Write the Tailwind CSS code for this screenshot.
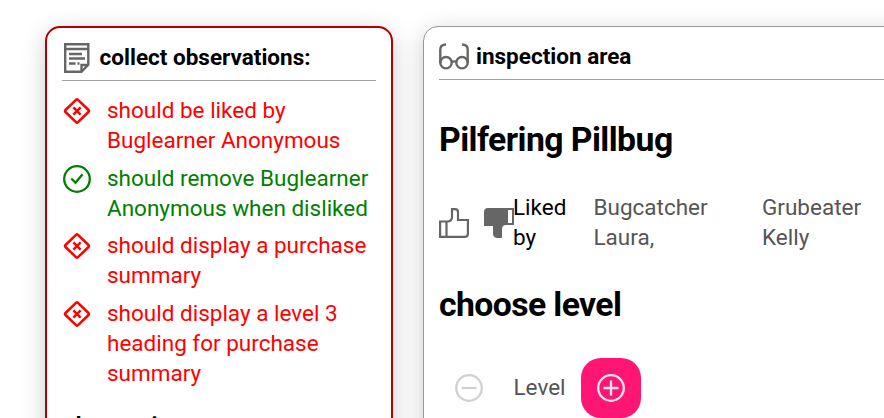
<!DOCTYPE html>
<html lang="en">
<head>
<meta charset="utf-8">
<title>Inspection</title>
<script src="https://cdn.jsdelivr.net/npm/@tailwindcss/browser@4"></script>
</head>
<body class="bg-white h-[418px] overflow-hidden font-[Roboto,sans-serif] text-[22.5px] leading-[30px] text-black">
<svg class="hidden">
  <symbol id="fail" viewBox="0 0 30 30"><g fill="none" stroke="currentColor" stroke-width="2.5"><path stroke-linejoin="round" d="M14 3.8 Q15 2.8 16 3.8 L26.5 14 Q27.5 15 26.5 16 L16 26.2 Q15 27.2 14 26.2 L3.5 16 Q2.5 15 3.5 14 Z"/><path d="M11.4 11.4 L18.6 18.6 M18.6 11.4 L11.4 18.6"/></g></symbol>
</svg>
<div class="flex items-start w-[884px] h-[418px] overflow-hidden pt-[26px] pl-[45px] gap-[30px]">
  <section class="w-[348px] h-[600px] shrink-0 border-2 border-[#b00000] rounded-[15px] px-[15px] pt-[14px] bg-white shadow-[0_6px_24px_rgba(0,0,0,0.2)]">
    <header class="flex items-start h-[39px] border-b border-[#a0a0a0]">
      <svg class="w-[30px] h-[32px] shrink-0" viewBox="0 0 30 32" fill="none" stroke="#666" stroke-width="2.4"><path d="M3.2 2.2 H26.3 V22.5 L19.5 29.8 H3.2 Z"/><path d="M3 7 H27 M7 12 H20 M7 16.5 H23 M7 21.5 H13.5 M15.5 21.5 H17.5"/><path d="M19.5 30 V23 H26.5"/></svg>
      <h2 class="ml-[7.6px] font-bold whitespace-nowrap">collect observations:</h2>
    </header>
    <ul class="mt-[14px] flex flex-col gap-[7.7px] text-[#f00]">
      <li class="flex gap-[15px]"><svg class="mt-px size-[30px] shrink-0"><use href="#fail"/></svg><span>should be liked by<br>Buglearner Anonymous</span></li>
      <li class="flex gap-[15px] text-[#008000]"><svg class="mt-px size-[30px] shrink-0" viewBox="0 0 30 30" fill="none" stroke="currentColor" stroke-width="2.3"><circle cx="15" cy="15" r="12.8"/><path d="M9.3 14.5 L13.5 18.8 L20.5 10.2"/></svg><span>should remove Buglearner<br>Anonymous when disliked</span></li>
      <li class="flex gap-[15px]"><svg class="mt-px size-[30px] shrink-0"><use href="#fail"/></svg><span>should display a purchase<br>summary</span></li>
      <li class="flex gap-[15px]"><svg class="mt-px size-[30px] shrink-0"><use href="#fail"/></svg><span>should display a level 3<br>heading for purchase<br>summary</span></li>
    </ul>
    <h2 class="mt-[22px] ml-px font-bold">observations:</h2>
  </section>
  <section class="w-[600px] h-[600px] shrink-0 border border-[#999] rounded-[15px] px-[15px] pt-[14px] bg-white shadow-[0_6px_24px_rgba(0,0,0,0.2)]">
    <header class="flex items-start h-[39px] border-b border-[#a0a0a0]">
      <svg class="mt-px w-[30px] h-[30px] shrink-0" viewBox="0 0 30 30" fill="none" stroke="#666" stroke-width="2.4"><circle cx="7" cy="20.7" r="5.7"/><circle cx="23" cy="20.7" r="5.7"/><path d="M12.8 20 Q15 18.8 17.2 20 M1.3 21 V7.5 Q1.3 2.5 7 2.5 M28.7 21 V7.5 Q28.7 2.5 23 2.5"/></svg>
      <h2 class="ml-[7px] font-bold">inspection area</h2>
    </header>
    <h1 class="mt-[40px] text-[33.75px] leading-[40px] font-bold tracking-[-0.56px]">Pilfering Pillbug</h1>
    <div class="mt-[32px] flex items-center h-[60px]">
      <svg class="mt-[2px] w-[30px] h-[30px] shrink-0" viewBox="0 0 30 30" fill="none" stroke="#666" stroke-width="2.2"><path d="M1.1 13.5 H8 Q13 13.5 13 9 V1.1 H16 Q19 1.1 19 4 V12 H28.9 V25.5 Q28.9 28.9 25.5 28.9 H1.1 Z M7.5 13.5 V29"/></svg>
      <svg class="mt-[2px] ml-[15px] w-[30px] h-[30px] shrink-0" viewBox="0 0 30 30"><path fill="#666" d="M4 0 H30 V17 H22 Q18 17 18 21 V30 H13 Q9 29 9 26 V18 H0 V4 Q0 0 4 0Z"/><path fill="#fff" d="M24 2 H28 V15 H24Z"/></svg>
      <span class="-ml-px w-[80.5px]">Liked<br>by</span>
      <span class="w-[168.5px] text-[#555]">Bugcatcher<br>Laura,</span>
      <span class="text-[#555]">Grubeater<br>Kelly</span>
    </div>
    <h1 class="mt-[33px] text-[33.75px] leading-[40px] font-bold tracking-[-0.6px]">choose level</h1>
    <div class="mt-[33px] flex items-center text-[#555]">
      <button class="size-[60px] flex items-center justify-center" aria-label="Decrease"><svg class="size-[30px]" viewBox="0 0 30 30" fill="none" stroke="#d0d0d0" stroke-width="2.3"><circle cx="15" cy="15" r="12.8"/><path d="M7.5 15 H22.5"/></svg></button>
      <span class="ml-[14.5px] w-[67.5px] -mt-[2px]">Level</span>
      <button class="size-[60px] rounded-[20px] bg-[#ff1675] flex items-center justify-center" aria-label="Increase"><svg class="size-[30px]" viewBox="0 0 30 30" fill="none" stroke="#f3e6ee" stroke-width="2.3"><circle cx="15" cy="15" r="12.8"/><path d="M7.5 15 H22.5 M15 7.5 V22.5"/></svg></button>
    </div>
  </section>
</div>
</body>
</html>
